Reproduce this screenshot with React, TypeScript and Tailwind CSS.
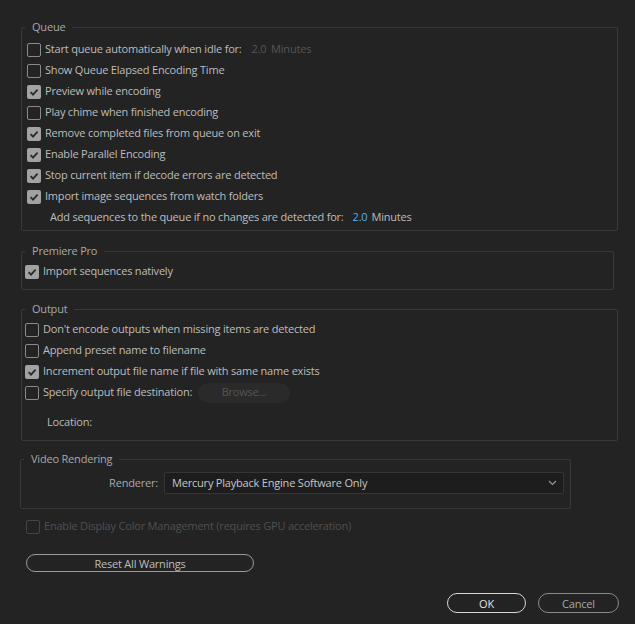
import { useState } from 'react';

type Opt = { label: string; checked: boolean; extra?: 'idle' | 'browse' };

const Check = ({ checked, disabled }: { checked: boolean; disabled?: boolean }) => {
  if (checked) {
    return (
      <span className="w-[14px] h-[14px] rounded-[2px] bg-[#a2a2a2] flex items-center justify-center shrink-0">
        <svg width="10" height="10" viewBox="0 0 10 10">
          <path d="M1.6 5.2 L4 7.6 L8.6 2.6" fill="none" stroke="#2a2a2a" strokeWidth="1.8" />
        </svg>
      </span>
    );
  }
  return (
    <span
      className={`w-[14px] h-[14px] rounded-[2px] border-[1.5px] shrink-0 ${
        disabled ? 'border-[#444444]' : 'border-[#8a8a8a]'
      }`}
    />
  );
};

const Row = ({ opt, onToggle }: { opt: Opt; onToggle: () => void }) => (
  <div className="h-[21px] flex items-center">
    <button className="flex items-center gap-[4px]" onClick={onToggle}>
      <Check checked={opt.checked} />
      <span className="text-[#bdbdbd]">{opt.label}</span>
    </button>
    {opt.extra === 'idle' && (
      <span className="ml-[10px] text-[#555555]">
        2.0 <span className="ml-[2px]">Minutes</span>
      </span>
    )}
    {opt.extra === 'browse' && (
      <span className="ml-[6px] w-[92px] h-[20px] rounded-full bg-[#2a2a2a] text-[#555555] flex items-center justify-center">
        Browse...
      </span>
    )}
  </div>
);

const Legend = ({ children }: { children: string }) => (
  <legend className="ml-[3px] px-[7px] leading-[16px] text-[#a8a8a8]">{children}</legend>
);

const App = () => {
  const [queue, setQueue] = useState<Opt[]>([
    { label: 'Start queue automatically when idle for:', checked: false, extra: 'idle' },
    { label: 'Show Queue Elapsed Encoding Time', checked: false },
    { label: 'Preview while encoding', checked: true },
    { label: 'Play chime when finished encoding', checked: false },
    { label: 'Remove completed files from queue on exit', checked: true },
    { label: 'Enable Parallel Encoding', checked: true },
    { label: 'Stop current item if decode errors are detected', checked: true },
    { label: 'Import image sequences from watch folders', checked: true }
  ]);
  const [premiere, setPremiere] = useState<Opt[]>([{ label: 'Import sequences natively', checked: true }]);
  const [output, setOutput] = useState<Opt[]>([
    { label: "Don't encode outputs when missing items are detected", checked: false },
    { label: 'Append preset name to filename', checked: false },
    { label: 'Increment output file name if file with same name exists', checked: true },
    { label: 'Specify output file destination:', checked: false, extra: 'browse' }
  ]);

  const toggle = (list: Opt[], set: (l: Opt[]) => void, i: number) =>
    set(list.map((o, j) => (j === i ? { ...o, checked: !o.checked } : o)));

  return (
    <div
      className="w-[635px] h-[624px] bg-[#232323] pt-[19px] text-[11px] tracking-[-0.2px] overflow-hidden"
      style={{ fontFamily: '"Open Sans", "Noto Sans", sans-serif' }}
    >
      <fieldset className="ml-[21px] mr-[17px] border border-[#393939] rounded-[2px] pt-[4px] pb-[2px]">
        <Legend>Queue</Legend>
        <div className="pl-[5px]">
          {queue.map((o, i) => (
            <Row key={o.label} opt={o} onToggle={() => toggle(queue, setQueue, i)} />
          ))}
          <div className="h-[21px] flex items-center pl-[23px] text-[#bdbdbd]">
            Add sequences to the queue if no changes are detected for:
            <span className="ml-[9px] text-[#5aaee6]">2.0</span>
            <span className="ml-[4px]">Minutes</span>
          </div>
        </div>
      </fieldset>

      <fieldset className="mt-[12px] ml-[21px] mr-[21px] border border-[#393939] rounded-[2px] pt-[2px] pb-[7px]">
        <Legend>Premiere Pro</Legend>
        <div className="pl-[3px]">
          {premiere.map((o, i) => (
            <Row key={o.label} opt={o} onToggle={() => toggle(premiere, setPremiere, i)} />
          ))}
        </div>
      </fieldset>

      <fieldset className="mt-[11px] ml-[21px] mr-[17px] border border-[#393939] rounded-[2px] pt-[2px] pb-[7px]">
        <Legend>Output</Legend>
        <div className="pl-[3px]">
          {output.map((o, i) => (
            <Row key={o.label} opt={o} onToggle={() => toggle(output, setOutput, i)} />
          ))}
          <div className="h-[21px] mt-[9px] flex items-center pl-[22px] text-[#bdbdbd]">Location:</div>
        </div>
      </fieldset>

      <fieldset className="mt-[10px] ml-[20px] mr-[64px] border border-[#393939] rounded-[2px] pt-[5px] pb-[14px]">
        <Legend>Video Rendering</Legend>
        <div className="flex items-center">
          <span className="w-[143px] text-right pr-[6px] text-[#a8a8a8]">Renderer:</span>
          <div className="w-[400px] h-[22px] bg-[#1d1d1d] border border-[#353535] rounded-[2px] flex items-center justify-between pl-[7px] pr-[6px] text-[#c6c6c6]">
            <span>Mercury Playback Engine Software Only</span>
            <svg width="9" height="6" viewBox="0 0 9 6">
              <path d="M1 1 L4.5 4.5 L8 1" fill="none" stroke="#9a9a9a" strokeWidth="1.1" />
            </svg>
          </div>
        </div>
      </fieldset>

      <div className="mt-[7px] ml-[26px] h-[21px] flex items-center gap-[4px]">
        <Check checked={false} disabled />
        <span className="text-[#4f4f4f]">Enable Display Color Management (requires GPU acceleration)</span>
      </div>

      <button className="mt-[17px] ml-[26px] w-[228px] h-[18px] rounded-full border border-[#9a9a9a] text-[#bdbdbd] flex items-center justify-center leading-none">
        Reset All Warnings
      </button>

      <div className="mt-[21px] flex justify-end gap-[12px] pr-[16px]">
        <button className="w-[79px] h-[20px] rounded-full border-[1.5px] border-[#d6d6d6] text-[#e0e0e0] flex items-center justify-center leading-none">
          OK
        </button>
        <button className="w-[81px] h-[20px] rounded-full border border-[#8a8a8a] text-[#a8a8a8] flex items-center justify-center leading-none">
          Cancel
        </button>
      </div>
    </div>
  );
};

export default App;
